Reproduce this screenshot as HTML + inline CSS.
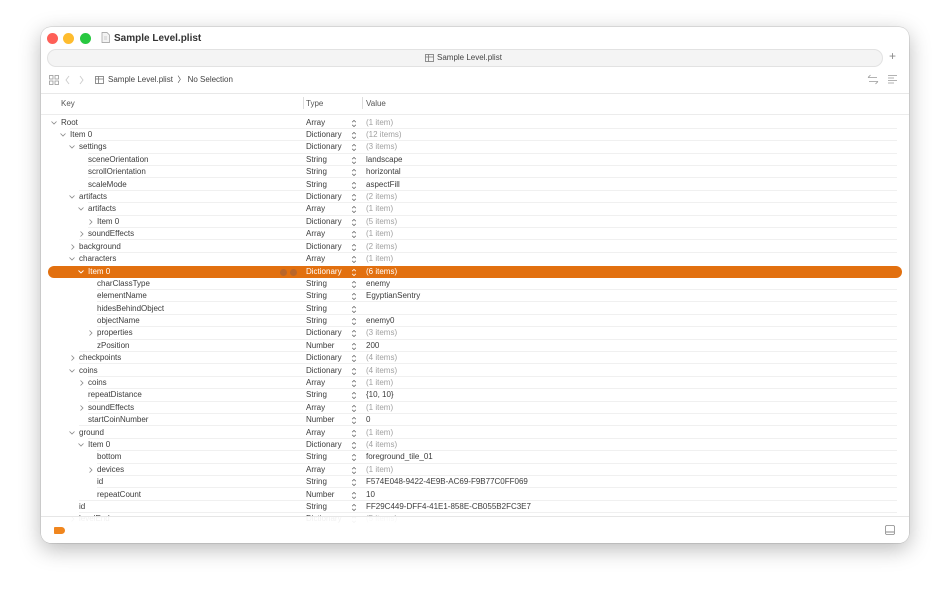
<!DOCTYPE html>
<html><head><meta charset="utf-8">
<style>
*{margin:0;padding:0;box-sizing:border-box}
body{width:950px;height:594px;background:#fff;font-family:"Liberation Sans",sans-serif;position:relative;overflow:hidden}
.win{position:absolute;left:41px;top:27px;width:868px;height:516px;background:#fff;border-radius:10px;box-shadow:0 6px 22px rgba(0,0,0,.28),0 0 0 .5px rgba(0,0,0,.18);overflow:hidden}
.dot{position:absolute;top:6px;width:11px;height:11px;border-radius:50%}
.t{position:absolute;font-size:8px;color:#333;white-space:nowrap;line-height:12px}
.r{position:absolute;left:0;width:868px;height:12.4px;margin-top:1.5px}
.r .k,.r .ty,.r .v{position:absolute;top:0;font-size:8px;line-height:12px;color:#3c3c3c;white-space:nowrap}
.r .ty{left:265px}
.r .v{left:325px}
.r .g{color:#a0a0a0}
.r .ln{position:absolute;bottom:0;right:12px;height:1px;background:#f0f0f0}
.st{position:absolute;left:310px;top:2px}
.ch{position:absolute;top:3px}
.sel{background:#e2700f;border-radius:6px;left:7px;width:854px}
.sel .k,.sel .ty,.sel .v{color:#fff}
</style></head><body>
<div class="win">
 <div class="dot" style="left:6px;background:#fe5f57"></div>
 <div class="dot" style="left:22px;background:#febc2e"></div>
 <div class="dot" style="left:39px;background:#28c840"></div>
 <svg style="position:absolute;left:60px;top:5px" width="9" height="11"><path d="M1 .5h5l2.5 2.5v7.5h-7.5z" fill="#f3f3f3" stroke="#999" stroke-width=".7"/><path d="M3 5h3M3 7h3" stroke="#aaa" stroke-width=".6"/></svg>
 <div class="t" style="left:73px;top:6px;font-size:10px;font-weight:bold;color:#333">Sample Level.plist</div>
 <div style="position:absolute;left:6px;top:22px;width:836px;height:18px;border-radius:9px;background:#f4f4f4;border:1px solid #e2e2e2"></div>
 <svg style="position:absolute;left:384px;top:27px" width="9" height="8"><rect x=".5" y=".5" width="8" height="7" fill="none" stroke="#777" stroke-width=".8"/><path d="M.5 3h8M3.5 .5v7" stroke="#777" stroke-width=".8"/></svg>
 <div class="t" style="left:396px;top:25px;color:#444">Sample Level.plist</div>
 <div class="t" style="left:848px;top:23px;font-size:12px;color:#888">+</div>
 <svg style="position:absolute;left:8px;top:48px" width="10" height="10"><g fill="none" stroke="#999" stroke-width=".8"><rect x=".5" y=".5" width="3.5" height="3.5"/><rect x="6" y=".5" width="3.5" height="3.5"/><rect x=".5" y="6" width="3.5" height="3.5"/><rect x="6" y="6" width="3.5" height="3.5"/></g></svg>
 <svg style="position:absolute;left:24px;top:48px" width="20" height="10"><path d="M4 1L1 5l3 4M15 1l3 4-3 4" fill="none" stroke="#ccc" stroke-width=".9"/></svg>
 <svg style="position:absolute;left:54px;top:49px" width="9" height="8"><rect x=".5" y=".5" width="8" height="7" fill="none" stroke="#777" stroke-width=".8"/><path d="M.5 3h8M3.5 .5v7" stroke="#777" stroke-width=".8"/></svg>
 <div class="t" style="left:67px;top:47px;color:#444">Sample Level.plist &nbsp;〉 No Selection</div>
 <svg style="position:absolute;left:826px;top:47px" width="12" height="11"><path d="M1 3.5h9M1 3.5l2.5-2.5M11 7.5H2M11 7.5l-2.5 2.5" fill="none" stroke="#999" stroke-width=".8"/></svg>
 <svg style="position:absolute;left:846px;top:47px" width="11" height="11"><path d="M1 1.5h9M1 4h6M1 6.5h9M1 9h6" stroke="#999" stroke-width=".8"/></svg>
 <div style="position:absolute;left:0;top:66px;width:868px;height:1px;background:#e8e8e8"></div>
 <div class="t" style="left:20px;top:71px;color:#555">Key</div>
 <div style="position:absolute;left:262px;top:70px;width:1px;height:12px;background:#ddd"></div>
 <div class="t" style="left:265px;top:71px;color:#555">Type</div>
 <div style="position:absolute;left:321px;top:70px;width:1px;height:12px;background:#ddd"></div>
 <div class="t" style="left:325px;top:71px;color:#555">Value</div>
 <div style="position:absolute;left:0;top:87px;width:868px;height:1px;background:#ececec"></div>

 <svg width="0" height="0" style="position:absolute"><defs>
  <g id="st"><path d="M1.2 3.2L3 1.4l1.8 1.8M1.2 5.8L3 7.6l1.8-1.8" fill="none" stroke="#666" stroke-width=".8"/></g>
  <g id="dn"><path d="M.5 1.5L3 4l2.5-2.5" fill="none" stroke="#888" stroke-width=".8"/></g>
  <g id="rt"><path d="M1.5.5L4 3 1.5 5.5" fill="none" stroke="#888" stroke-width=".8"/></g>
 </defs></svg>

<div class="r" style="top:88px"><svg class="ch" style="left:10px" width="6" height="6"><use href="#dn"/></svg><span class="k" style="left:20px">Root</span><span class="ty">Array</span><svg class="st" width="6" height="9"><use href="#st"/></svg><span class="v g">(1 item)</span><div class="ln" style="left:29px"></div></div>
<div class="r" style="top:100.4px"><svg class="ch" style="left:19px" width="6" height="6"><use href="#dn"/></svg><span class="k" style="left:29px">Item 0</span><span class="ty">Dictionary</span><svg class="st" width="6" height="9"><use href="#st"/></svg><span class="v g">(12 items)</span><div class="ln" style="left:38px"></div></div>
<div class="r" style="top:112.8px"><svg class="ch" style="left:28px" width="6" height="6"><use href="#dn"/></svg><span class="k" style="left:38px">settings</span><span class="ty">Dictionary</span><svg class="st" width="6" height="9"><use href="#st"/></svg><span class="v g">(3 items)</span><div class="ln" style="left:47px"></div></div>
<div class="r" style="top:125.2px"><span class="k" style="left:47px">sceneOrientation</span><span class="ty">String</span><svg class="st" width="6" height="9"><use href="#st"/></svg><span class="v">landscape</span><div class="ln" style="left:47px"></div></div>
<div class="r" style="top:137.6px"><span class="k" style="left:47px">scrollOrientation</span><span class="ty">String</span><svg class="st" width="6" height="9"><use href="#st"/></svg><span class="v">horizontal</span><div class="ln" style="left:47px"></div></div>
<div class="r" style="top:150px"><span class="k" style="left:47px">scaleMode</span><span class="ty">String</span><svg class="st" width="6" height="9"><use href="#st"/></svg><span class="v">aspectFill</span><div class="ln" style="left:38px"></div></div>
<div class="r" style="top:162.4px"><svg class="ch" style="left:28px" width="6" height="6"><use href="#dn"/></svg><span class="k" style="left:38px">artifacts</span><span class="ty">Dictionary</span><svg class="st" width="6" height="9"><use href="#st"/></svg><span class="v g">(2 items)</span><div class="ln" style="left:47px"></div></div>
<div class="r" style="top:174.8px"><svg class="ch" style="left:37px" width="6" height="6"><use href="#dn"/></svg><span class="k" style="left:47px">artifacts</span><span class="ty">Array</span><svg class="st" width="6" height="9"><use href="#st"/></svg><span class="v g">(1 item)</span><div class="ln" style="left:56px"></div></div>
<div class="r" style="top:187.2px"><svg class="ch" style="left:47px" width="6" height="6"><use href="#rt"/></svg><span class="k" style="left:56px">Item 0</span><span class="ty">Dictionary</span><svg class="st" width="6" height="9"><use href="#st"/></svg><span class="v g">(5 items)</span><div class="ln" style="left:47px"></div></div>
<div class="r" style="top:199.6px"><svg class="ch" style="left:38px" width="6" height="6"><use href="#rt"/></svg><span class="k" style="left:47px">soundEffects</span><span class="ty">Array</span><svg class="st" width="6" height="9"><use href="#st"/></svg><span class="v g">(1 item)</span><div class="ln" style="left:38px"></div></div>
<div class="r" style="top:212px"><svg class="ch" style="left:29px" width="6" height="6"><use href="#rt"/></svg><span class="k" style="left:38px">background</span><span class="ty">Dictionary</span><svg class="st" width="6" height="9"><use href="#st"/></svg><span class="v g">(2 items)</span><div class="ln" style="left:38px"></div></div>
<div class="r" style="top:224.4px"><svg class="ch" style="left:28px" width="6" height="6"><use href="#dn"/></svg><span class="k" style="left:38px">characters</span><span class="ty">Array</span><svg class="st" width="6" height="9"><use href="#st"/></svg><span class="v g">(1 item)</span></div>
<div class="r sel" style="top:237px;height:12px"><svg class="ch" style="left:30px" width="6" height="6"><path d="M.5 1.5L3 4l2.5-2.5" fill="none" stroke="#fff" stroke-width=".9"/></svg><span class="k" style="left:40px">Item 0</span><div style="position:absolute;left:232px;top:3px;width:7px;height:7px;border-radius:50%;background:#b9662a"></div><div style="position:absolute;left:242px;top:3px;width:7px;height:7px;border-radius:50%;background:#b9662a"></div><span class="ty" style="left:258px">Dictionary</span><svg class="st" style="left:303px" width="6" height="9"><path d="M1.2 3.2L3 1.4l1.8 1.8M1.2 5.8L3 7.6l1.8-1.8" fill="none" stroke="#fff" stroke-width=".8"/></svg><span class="v" style="left:318px">(6 items)</span></div>
<div class="r" style="top:249.2px"><span class="k" style="left:56px">charClassType</span><span class="ty">String</span><svg class="st" width="6" height="9"><use href="#st"/></svg><span class="v">enemy</span><div class="ln" style="left:56px"></div></div>
<div class="r" style="top:261.6px"><span class="k" style="left:56px">elementName</span><span class="ty">String</span><svg class="st" width="6" height="9"><use href="#st"/></svg><span class="v">EgyptianSentry</span><div class="ln" style="left:56px"></div></div>
<div class="r" style="top:274px"><span class="k" style="left:56px">hidesBehindObject</span><span class="ty">String</span><svg class="st" width="6" height="9"><use href="#st"/></svg><div class="ln" style="left:56px"></div></div>
<div class="r" style="top:286.4px"><span class="k" style="left:56px">objectName</span><span class="ty">String</span><svg class="st" width="6" height="9"><use href="#st"/></svg><span class="v">enemy0</span><div class="ln" style="left:56px"></div></div>
<div class="r" style="top:298.8px"><svg class="ch" style="left:47px" width="6" height="6"><use href="#rt"/></svg><span class="k" style="left:56px">properties</span><span class="ty">Dictionary</span><svg class="st" width="6" height="9"><use href="#st"/></svg><span class="v g">(3 items)</span><div class="ln" style="left:56px"></div></div>
<div class="r" style="top:311.2px"><span class="k" style="left:56px">zPosition</span><span class="ty">Number</span><svg class="st" width="6" height="9"><use href="#st"/></svg><span class="v">200</span><div class="ln" style="left:38px"></div></div>
<div class="r" style="top:323.6px"><svg class="ch" style="left:29px" width="6" height="6"><use href="#rt"/></svg><span class="k" style="left:38px">checkpoints</span><span class="ty">Dictionary</span><svg class="st" width="6" height="9"><use href="#st"/></svg><span class="v g">(4 items)</span><div class="ln" style="left:38px"></div></div>
<div class="r" style="top:336px"><svg class="ch" style="left:28px" width="6" height="6"><use href="#dn"/></svg><span class="k" style="left:38px">coins</span><span class="ty">Dictionary</span><svg class="st" width="6" height="9"><use href="#st"/></svg><span class="v g">(4 items)</span><div class="ln" style="left:47px"></div></div>
<div class="r" style="top:348.4px"><svg class="ch" style="left:38px" width="6" height="6"><use href="#rt"/></svg><span class="k" style="left:47px">coins</span><span class="ty">Array</span><svg class="st" width="6" height="9"><use href="#st"/></svg><span class="v g">(1 item)</span><div class="ln" style="left:47px"></div></div>
<div class="r" style="top:360.8px"><span class="k" style="left:47px">repeatDistance</span><span class="ty">String</span><svg class="st" width="6" height="9"><use href="#st"/></svg><span class="v">{10, 10}</span><div class="ln" style="left:47px"></div></div>
<div class="r" style="top:373.2px"><svg class="ch" style="left:38px" width="6" height="6"><use href="#rt"/></svg><span class="k" style="left:47px">soundEffects</span><span class="ty">Array</span><svg class="st" width="6" height="9"><use href="#st"/></svg><span class="v g">(1 item)</span><div class="ln" style="left:47px"></div></div>
<div class="r" style="top:385.6px"><span class="k" style="left:47px">startCoinNumber</span><span class="ty">Number</span><svg class="st" width="6" height="9"><use href="#st"/></svg><span class="v">0</span><div class="ln" style="left:38px"></div></div>
<div class="r" style="top:398px"><svg class="ch" style="left:28px" width="6" height="6"><use href="#dn"/></svg><span class="k" style="left:38px">ground</span><span class="ty">Array</span><svg class="st" width="6" height="9"><use href="#st"/></svg><span class="v g">(1 item)</span><div class="ln" style="left:47px"></div></div>
<div class="r" style="top:410.4px"><svg class="ch" style="left:37px" width="6" height="6"><use href="#dn"/></svg><span class="k" style="left:47px">Item 0</span><span class="ty">Dictionary</span><svg class="st" width="6" height="9"><use href="#st"/></svg><span class="v g">(4 items)</span><div class="ln" style="left:56px"></div></div>
<div class="r" style="top:422.8px"><span class="k" style="left:56px">bottom</span><span class="ty">String</span><svg class="st" width="6" height="9"><use href="#st"/></svg><span class="v">foreground_tile_01</span><div class="ln" style="left:56px"></div></div>
<div class="r" style="top:435.2px"><svg class="ch" style="left:47px" width="6" height="6"><use href="#rt"/></svg><span class="k" style="left:56px">devices</span><span class="ty">Array</span><svg class="st" width="6" height="9"><use href="#st"/></svg><span class="v g">(1 item)</span><div class="ln" style="left:56px"></div></div>
<div class="r" style="top:447.6px"><span class="k" style="left:56px">id</span><span class="ty">String</span><svg class="st" width="6" height="9"><use href="#st"/></svg><span class="v">F574E048-9422-4E9B-AC69-F9B77C0FF069</span><div class="ln" style="left:56px"></div></div>
<div class="r" style="top:460px"><span class="k" style="left:56px">repeatCount</span><span class="ty">Number</span><svg class="st" width="6" height="9"><use href="#st"/></svg><span class="v">10</span><div class="ln" style="left:38px"></div></div>
<div class="r" style="top:472.4px"><span class="k" style="left:38px">id</span><span class="ty">String</span><svg class="st" width="6" height="9"><use href="#st"/></svg><span class="v">FF29C449-DFF4-41E1-858E-CB055B2FC3E7</span><div class="ln" style="left:38px"></div></div>
<div class="r" style="top:484.8px"><svg class="ch" style="left:29px" width="6" height="6"><use href="#rt"/></svg><span class="k" style="left:38px">levelEnd</span><span class="ty">Dictionary</span><svg class="st" width="6" height="9"><use href="#st"/></svg><span class="v g">(5 items)</span></div>

 <div style="position:absolute;left:0;top:489px;width:868px;height:27px;background:rgba(255,255,255,.93);border-top:1px solid #e6e6e6"></div>
 <div style="position:absolute;left:13px;top:500px;width:11px;height:7px;background:#f0861e;border-radius:1px 4px 4px 1px"></div>
 <svg style="position:absolute;left:844px;top:498px" width="10" height="10"><rect x=".5" y=".5" width="9" height="9" rx="1.5" fill="none" stroke="#888" stroke-width=".8"/><path d="M1 7h8" stroke="#888" stroke-width="1"/></svg>
</div>
</body></html>
